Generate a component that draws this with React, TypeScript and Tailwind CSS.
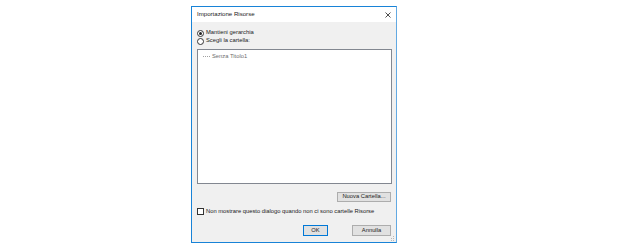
import React from "react";

function Radio({ checked }: { checked?: boolean }) {
  return (
    <span className="w-[7px] h-[7px] rounded-full border border-[#333333] bg-white flex items-center justify-center shrink-0">
      {checked && <span className="w-[3px] h-[3px] rounded-full bg-[#222222]" />}
    </span>
  );
}

export default function App() {
  return (
    <div
      className="w-[617px] h-[248px] bg-white pt-[6px] pl-[191px] text-[5.8px] leading-none text-[#1a1a1a]"
      style={{ fontFamily: '"Liberation Sans", Arial, sans-serif' }}
    >
      <div className="w-[206px] h-[237px] border border-[#1883d7] border-r-[#62a9e2] bg-[#f0f0f0] flex flex-col relative">
        {/* title bar */}
        <div className="h-[15px] bg-white flex items-center justify-between pl-[5px] pr-[4px] shrink-0">
          <span className="text-[6.1px] text-[#1a1a1a]">Importazione Risorse</span>
          <svg width="6" height="6" viewBox="0 0 6 6" className="mr-[1px]">
            <path d="M0.5 0.5 L5.5 5.5 M5.5 0.5 L0.5 5.5" stroke="#222" strokeWidth="0.8" />
          </svg>
        </div>
        {/* body */}
        <div className="flex flex-col pl-[5px] pr-[4px]">
          <div className="mt-[7px] h-[8px] flex items-center gap-[2px]">
            <Radio checked />
            <span>Mantieni gerarchia</span>
          </div>
          <div className="h-[8px] flex items-center gap-[2px]">
            <Radio />
            <span>Scegli la cartella:</span>
          </div>
          <div className="mt-[4px] w-[195px] h-[135px] border border-[#828790] bg-white pt-[3px] pl-[5px]">
            <div className="flex items-center h-[7px]">
              <span className="w-[7px] border-t border-dotted border-[#a0a0a0] mr-[2px]" />
              <span className="text-[#6d6d6d]">Senza Titolo1</span>
            </div>
          </div>
          <div className="mt-[8px] flex justify-end pr-[1px]">
            <div className="w-[54px] h-[10px] border border-[#adadad] bg-[#e1e1e1] flex items-center justify-center">
              Nuova Cartella...
            </div>
          </div>
          <div className="mt-[6px] h-[7px] flex items-center gap-[2px]">
            <span className="w-[7px] h-[7px] border border-[#333333] bg-white shrink-0" />
            <span>Non mostrare questo dialogo quando non ci sono cartelle Risorse</span>
          </div>
          <div className="mt-[10px] flex justify-end gap-[24px] pr-[1px]">
            <div className="w-[25px] h-[11px] border border-[#0078d7] bg-[#e1e1e1] flex items-center justify-center">
              OK
            </div>
            <div className="w-[39px] h-[11px] border border-[#adadad] bg-[#e1e1e1] flex items-center justify-center">
              Annulla
            </div>
          </div>
        </div>
        <svg width="5" height="5" viewBox="0 0 5 5" className="absolute right-[1px] bottom-[1px]">
          <rect x="3" y="0" width="1" height="1" fill="#b8b8b8" />
          <rect x="1" y="2" width="1" height="1" fill="#b8b8b8" />
          <rect x="3" y="2" width="1" height="1" fill="#b8b8b8" />
          <rect x="3" y="4" width="1" height="1" fill="#b8b8b8" />
          <rect x="1" y="4" width="1" height="1" fill="#b8b8b8" />
        </svg>
      </div>
    </div>
  );
}
